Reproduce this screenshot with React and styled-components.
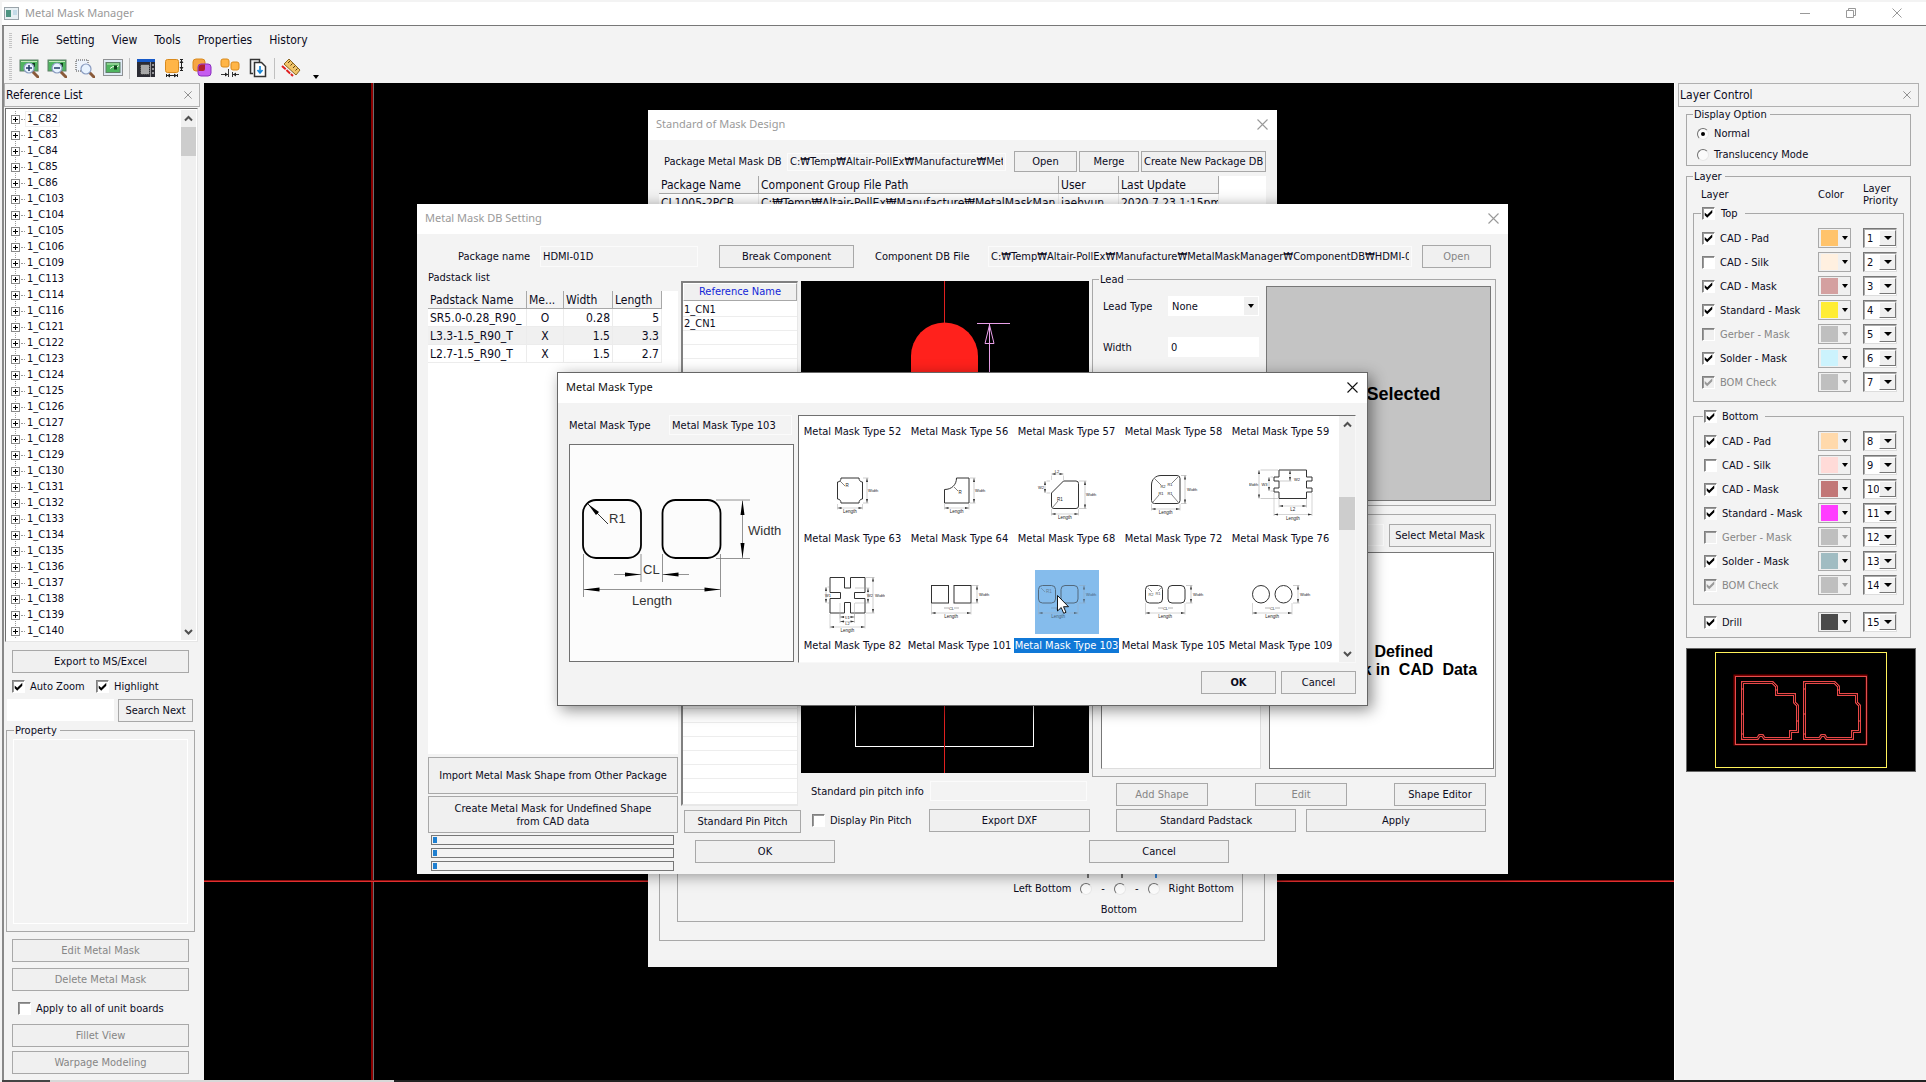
import React from 'react';
import styled, { createGlobalStyle, css } from 'styled-components';

const UI_FONT = '"DejaVu Sans Condensed", "DejaVu Sans", sans-serif';
const TITLE_FONT = '"Noto Sans", "Open Sans", sans-serif';
const ART_FONT = '"Liberation Sans", Arial, sans-serif';
const FACE = '#f3f3f3';
const LINE = '#a8a8a8';
const INK = '#0b0b1c';

const GlobalStyle = createGlobalStyle`
  *, *::before, *::after { box-sizing: border-box; }
  body { margin: 0; background: ${FACE}; }
  button, input, select { font: inherit; color: inherit; margin: 0; }
  ul { list-style: none; margin: 0; padding: 0; }
  svg { display: block; }
`;

/* ---------- shared controls ---------- */

const Button = styled.button`
  height: ${(p) => p.$h || 23}px;
  width: ${(p) => (p.$w ? p.$w + 'px' : 'auto')};
  padding: 0 2px;
  border: 1px solid ${LINE};
  border-radius: 0;
  background: #f0f0f0;
  color: ${INK};
  font-size: 11px;
  line-height: 13px;
  font-weight: ${(p) => (p.$strong ? 700 : 400)};
  white-space: nowrap;
  flex: none;
  &:disabled { color: #868686; }
`;

const TextField = styled.input`
  height: ${(p) => p.$h || 20}px;
  width: ${(p) => (p.$w ? p.$w + 'px' : '100%')};
  min-width: 0;
  padding: 0 2px;
  border: 1px solid ${(p) => (p.readOnly ? '#fbfbfb' : '#fff')};
  background: ${(p) => (p.readOnly ? FACE : '#fff')};
  font-size: 11px;
  line-height: 13px;
  outline: none;
`;

const Tick = styled.input.attrs({ type: 'checkbox' })`
  appearance: none;
  width: 13px;
  height: 13px;
  flex: none;
  display: grid;
  place-items: center;
  background: ${(p) => (p.disabled ? '#f0f0f0' : '#fff')};
  border: 1px solid;
  border-color: #808080 #fff #fff #808080;
  box-shadow: inset 1px 1px 0 #9a9a9a;
  &:checked::before {
    content: '';
    width: 9px;
    height: 9px;
    background: ${(p) => (p.disabled ? '#9a9a9a' : '#000')};
    clip-path: polygon(8% 38%, 36% 64%, 92% 8%, 92% 42%, 36% 98%, 8% 70%);
  }
`;

const Dot = styled.input.attrs({ type: 'radio' })`
  appearance: none;
  width: 12px;
  height: 12px;
  flex: none;
  display: grid;
  place-items: center;
  border-radius: 50%;
  background: #fbfbfb;
  border: 1px solid;
  border-color: #707070 #e8e8e8 #e8e8e8 #707070;
  &:checked::before {
    content: '';
    width: 4px;
    height: 4px;
    border-radius: 50%;
    background: #000;
  }
`;

const CheckLabel = styled.label`
  display: flex;
  align-items: center;
  gap: ${(p) => p.$gap || 5}px;
  color: ${(p) => (p.$off ? '#868686' : INK)};
  white-space: nowrap;
`;

function Check({ children, on, off, gap }) {
  return (
    <CheckLabel $off={off} $gap={gap}>
      <Tick defaultChecked={on} disabled={off} />
      {children}
    </CheckLabel>
  );
}

const Group = styled.fieldset`
  min-width: 0;
  margin: ${(p) => p.$m || '0'};
  padding: ${(p) => p.$p || '0'};
  border: 1px solid ${LINE};
`;

const Legend = styled.legend`
  margin-left: ${(p) => p.$x || 6}px;
  padding: 0 ${(p) => (p.$wide ? 7 : 3)}px 0 1px;
  height: 13px;
  line-height: 13px;
`;

const Arrow = styled.span`
  display: block;
  width: 0;
  height: 0;
  border: 4px solid transparent;
  border-top-color: ${(p) => (p.$off ? '#9a9a9a' : '#000')};
  border-bottom: 0;
  border-left-width: ${(p) => p.$s || 4}px;
  border-right-width: ${(p) => p.$s || 4}px;
`;

const Combo = styled.div`
  display: grid;
  grid-template-columns: 1fr ${(p) => (p.$raised ? 17 : 14)}px;
  width: ${(p) => p.$w}px;
  height: ${(p) => p.$h}px;
  background: #fff;
  border: 1px solid #fff;
  ${(p) => p.$raised && css`border-color: #777 #ddd #ddd #777; box-shadow: inset 1px 1px 0 #aaa;`}
  select {
    grid-area: 1 / 1 / 2 / 3;
    appearance: none;
    border: 0;
    padding: 0 2px 0 3px;
    background: transparent;
    outline: none;
    min-width: 0;
  }
`;

const ComboArrow = styled.span`
  grid-area: 1 / 2;
  pointer-events: none;
  display: grid;
  place-items: center;
  background: #f0f0f0;
  ${(p) => p.$raised && css`
    margin: 1px 0;
    border: 1px solid;
    border-color: #fff #777 #777 #fff;
  `}
`;

const BarTrack = styled.div`
  width: ${(p) => p.$w || 15}px;
  flex: none;
  display: flex;
  flex-direction: column;
  align-items: center;
  background: #f0f0f0;
`;
const BarLead = styled.div`flex: ${(p) => p.$grow};`;
const BarThumb = styled.div`
  width: 100%;
  height: ${(p) => p.$h}px;
  background: #cdcdcd;
`;

function Chevron({ down }) {
  return (
    <svg width="15" height="17" viewBox="0 0 15 17" fill="none" stroke="#505050" strokeWidth="2">
      <path d={down ? 'M4 7l3.5 3.5L11 7' : 'M4 10.500l3.500-3.500L11 10.500'} />
    </svg>
  );
}

function ScrollBar({ w, before, thumb, after }) {
  return (
    <BarTrack $w={w} aria-hidden="true">
      <Chevron />
      <BarLead $grow={before} />
      <BarThumb $h={thumb} />
      <BarLead $grow={after} />
      <Chevron down />
    </BarTrack>
  );
}

const CloseButton = styled.button`
  width: ${(p) => p.$s || 30}px;
  height: ${(p) => p.$s || 30}px;
  padding: 0;
  border: 0;
  background: transparent;
  color: ${(p) => p.$c || '#999'};
  display: grid;
  place-items: center;
`;

function Close({ size = 11, color, box }) {
  return (
    <CloseButton $c={color} $s={box} aria-label="Close">
      <svg width={size} height={size} viewBox="0 0 11 11" stroke="currentColor" strokeWidth="1.1">
        <path d="M.5.500l10 10M10.500.500l-10 10" />
      </svg>
    </CloseButton>
  );
}

/* ---------- main window ---------- */

const Shell = styled.div`
  min-height: 100vh;
  display: flex;
  flex-direction: column;
  padding: 2px 0 0 2px;
  background: ${FACE};
  color: ${INK};
  font: 11px/13px ${UI_FONT};
`;

const TitleBar = styled.header`
  display: flex;
  align-items: center;
  height: 24px;
  padding: 0 6px 1px 2px;
  background: #fff;
  border-bottom: 1px solid #777;
  color: #999;
  font: 11px/16px ${TITLE_FONT};
`;
const AppName = styled.span`flex: 1; padding-left: 6px;`;
const SysButton = styled.button`
  width: 46px;
  height: 22px;
  border: 0;
  padding: 0;
  background: transparent;
  color: #999;
  display: grid;
  place-items: center;
`;

const Frame = styled.div`
  flex: 1;
  display: flex;
  flex-direction: column;
  border-left: 2px solid #888;
`;

const Grip = styled.span`
  width: 3px;
  height: 15px;
  background: repeating-linear-gradient(#c4c4c4 0 1px, transparent 1px 2px);
`;

const MenuBar = styled.nav`
  display: flex;
  align-items: center;
  gap: 17px;
  height: 27px;
  padding: 1px 0 0 5px;
  font-size: 12px;
  ${Grip} { margin-right: -8px; }
`;
const MenuItem = styled.button`
  border: 0;
  padding: 0;
  background: transparent;
`;

const ToolBar = styled.div`
  display: flex;
  align-items: center;
  gap: 8px;
  height: 30px;
  padding-left: 5px;
  ${Grip} { height: 23px; margin-right: -1px; }
`;
const ToolButton = styled.button`
  width: 20px;
  height: 20px;
  border: 0;
  padding: 0;
  background: transparent;
`;
const ToolRule = styled.span`
  width: 1px;
  height: 21px;
  margin: 0 -2px 0 -2px;
  background: #c0c0c0;
`;
const ToolMore = styled.button`
  align-self: flex-end;
  border: 0;
  padding: 0 0 4px 4px;
  background: transparent;
`;

const Work = styled.div`
  flex: 1;
  display: flex;
  align-items: stretch;
`;

const StatusEdge = styled.div`
  height: 2px;
  background: linear-gradient(90deg, #444 48px, #d8d8d8 48px 392px, #222 392px);
`;

/* toolbar drawings */

const Board = ({ x = 1, y = 2, w = 18, h = 11 }) => (
  <g>
    <rect x={x} y={y} width={w} height={h} fill="#4fb560" stroke="#5f7f68" />
    <path d={`M${x + 1} ${y + 1.500}h${w - 2}`} stroke="#c4ecbc" />
    <path d={`M${x + 4} ${y + 6}l3-2 3 1 3-2`} stroke="#e8f8e0" fill="none" />
    <rect x={x + w - 6} y={y + 3} width="3" height="4" fill="#10401c" />
  </g>
);
const Lens = ({ cx = 10, cy = 10, sign }) => (
  <g>
    <path d={`M${cx + 4} ${cy + 4}l5 5`} stroke="#8a5a3a" strokeWidth="3" strokeLinecap="round" />
    <circle cx={cx} cy={cy} r="5" fill="#e8f3ff" stroke="#8a9cc0" strokeWidth="1.200" />
    {sign && <path d={`M${cx - 3} ${cy}h6` + (sign === '+' ? `M${cx} ${cy - 3}v6` : '')} stroke="#223a66" strokeWidth="1.500" />}
  </g>
);
const Icon = ({ children }) => <svg width="20" height="20" viewBox="0 0 20 20" fill="none">{children}</svg>;

const TOOLS = [
  ['Zoom in', <Icon key="i"><Board /><Lens sign="+" /></Icon>],
  ['Zoom out', <Icon key="i"><Board /><Lens sign="-" /></Icon>],
  ['Zoom window', <Icon key="i"><rect x="1" y="2" width="12" height="11" fill="#edf3fb" stroke="#444" strokeDasharray="1 1" /><Lens cx={11} cy={11} /></Icon>],
  ['Fit to board', <Icon key="i"><rect x=".5" y="1.500" width="19" height="16" fill="#dfeaf5" stroke="#333" strokeDasharray="1 1" /><Board x={3} y={4.500} w={14} h={10} /></Icon>],
  null,
  ['Component', <Icon key="i"><rect x="1" y="1" width="18" height="18" fill="#2c2c34" /><rect x="1" y="1" width="18" height="3" fill="#1659c8" /><rect x="4.500" y="6.500" width="9" height="10" rx="1" fill="#a8a8a8" stroke="#222" strokeDasharray="1 1" /><path d="M14.500 4v15" stroke="#ddd" strokeWidth=".6" /><path d="M17 6v2m0 2v2m0 2v2" stroke="#fff" /></Icon>],
  ['Pad size', <Icon key="i"><rect x="1.500" y="1.500" width="13" height="13" rx="2" fill="#ffb547" stroke="#d98a1c" /><path d="M17.500 1v12M16 1.500h3M16 12.500h3M2 17.500h11M2.500 16v3M13.500 16v3" stroke="#222" /><path d="M15.500 5l2-3 2 3zM15.500 9l2 3 2-3zM6 15.500l-3 2 3 2zM10 15.500l3 2-3 2z" fill="#222" /></Icon>],
  ['Overlap', <Icon key="i"><rect x="1" y="1" width="12" height="12" rx="3" fill="#f6a545" stroke="#d98a1c" /><rect x="6" y="6" width="13" height="12" rx="3" fill="#c65cf0" stroke="#8b2fc0" /><path d="M6.500 9a3 3 0 013-2.500H13V11a2 2 0 01-2 2H6.500z" fill="#b01f2e" /></Icon>],
  ['Spacing', <Icon key="i"><rect x="1" y="1" width="8" height="8" rx="2" fill="#ffb547" stroke="#d98a1c" /><rect x="11" y="4" width="8" height="8" rx="2" fill="#ffb547" stroke="#d98a1c" /><path d="M8.500 11v8M12.500 14v5M1 16.500h7M13 16.500h6" stroke="#333" /><path d="M5 14.500l3 2-3 2zM16 14.500l-3 2 3 2z" fill="#222" /></Icon>],
  ['Export copy', <Icon key="i"><path d="M5 15.500H2.500v-14h9V4" stroke="#333" strokeWidth="1.500" /><path d="M6.500 4.500h7l4 4v10h-11z" fill="#fff" stroke="#333" strokeWidth="1.500" /><path d="M12 8v6M9.500 12l2.500 3 2.500-3" stroke="#1787d8" strokeWidth="1.700" /></Icon>],
  null,
  ['Measure', <Icon key="i"><path d="M3 6l5-5 11 11-4 5z" fill="#f0c468" stroke="#8a6420" /><path d="M7 5l2-2M9.500 7.500l2-2M12 10l2-2M14.500 12.500l2-2" stroke="#5a3c0c" /><path d="M1 8l11 10" stroke="#e02020" strokeWidth="2" strokeDasharray="5 1" /></Icon>],
];

/* ---------- reference list dock ---------- */

const DockHead = styled.div`
  display: flex;
  align-items: center;
  justify-content: space-between;
  height: 24px;
  margin: ${(p) => p.$m};
  padding: 0 0 0 1px;
  border: 1px solid #b0b0b0;
  font: 12px/16px ${UI_FONT};
  h2 { margin: 0; font: inherit; }
`;

const LeftDock = styled.aside`
  width: 200px;
  flex: none;
  display: flex;
  flex-direction: column;
  padding-bottom: 6px;
`;

const TreeBox = styled.div`
  display: flex;
  margin: 1px 6px 0 1px;
  padding: 1px;
  background: #fff;
  border: 1px solid;
  border-color: #707070 #e6e6e6 #e6e6e6 #707070;
`;
const Tree = styled.ul`
  flex: 1;
  padding: 1px 0 1px 4px;
`;
const TreeRow = styled.li`
  display: flex;
  align-items: center;
  height: 16px;
`;
const NodeCell = styled.span`
  display: grid;
  place-items: center;
  width: 9px;
  height: 16px;
  background: repeating-linear-gradient(#999 0 1px, transparent 1px 2px) center / 1px 100% no-repeat;
`;
const NodeToggle = styled.button`
  width: 9px;
  height: 9px;
  padding: 0;
  border: 1px solid #888;
  background:
    linear-gradient(#000, #000) center / 5px 1px no-repeat,
    linear-gradient(#000, #000) center / 1px 5px no-repeat,
    #fff;
`;
const NodeDash = styled.span`
  width: 4px;
  margin: 0 1px;
  border-top: 1px dotted #999;
`;
const NodeName = styled.span`
  padding: 0 1px;
  line-height: 14px;
  box-shadow: ${(p) => (p.$focus ? '0 0 0 1px #f0f0f0' : 'none')};
`;

const Stack = styled.div`
  display: flex;
  flex-direction: column;
  margin: 0 15px 0 8px;
  padding-top: ${(p) => p.$top}px;
  gap: ${(p) => p.$gap || 0}px;
`;
const CheckPair = styled.div`
  display: grid;
  grid-template-columns: 84px 1fr;
  padding: 7px 0 6px 8px;
`;
const SearchRow = styled.div`
  display: grid;
  grid-template-columns: 1fr 75px;
  gap: 4px;
  margin: 0 11px 2px 3px;
`;
const PropertyGroup = styled(Group)`
  flex: 1;
  display: flex;
  margin: 0 9px 0 2px;
  padding: 2px 6px 7px;
`;
const PropertyView = styled.div`
  flex: 1;
  border: 1px solid #fff;
`;
const UnitCheck = styled.div`padding: 11px 0 9px 14px;`;

const REFERENCES = [82, 83, 84, 85, 86, 103, 104, 105, 106, 109, 113, 114, 116, ...Array.from({ length: 20 }, (_, i) => 121 + i)];

function ReferenceDock() {
  return (
    <LeftDock>
      <DockHead $m="0 4px 0 0"><h2>Reference List</h2><Close size={8} box={22} color="#777" /></DockHead>
      <TreeBox>
        <Tree>
          {REFERENCES.map((n, i) => (
            <TreeRow key={n}>
              <NodeCell><NodeToggle aria-label={`Expand 1_C${n}`} /></NodeCell>
              <NodeDash />
              <NodeName $focus={i === 0}>{`1_C${n}`}</NodeName>
            </TreeRow>
          ))}
        </Tree>
        <ScrollBar before={0} thumb={29} after={1} />
      </TreeBox>
      <Stack $top={8}><Button>Export to MS/Excel</Button></Stack>
      <CheckPair>
        <Check on>Auto Zoom</Check>
        <Check on>Highlight</Check>
      </CheckPair>
      <SearchRow>
        <TextField $h={22} aria-label="Search reference" />
        <Button>Search Next</Button>
      </SearchRow>
      <PropertyGroup>
        <Legend $x={1}>Property</Legend>
        <PropertyView />
      </PropertyGroup>
      <Stack $top={7} $gap={6}>
        <Button disabled>Edit Metal Mask</Button>
        <Button disabled>Delete Metal Mask</Button>
      </Stack>
      <UnitCheck><Check>Apply to all of unit boards</Check></UnitCheck>
      <Stack $top={0} $gap={4}>
        <Button disabled>Fillet View</Button>
        <Button disabled>Warpage Modeling</Button>
      </Stack>
    </LeftDock>
  );
}

/* ---------- layer control dock ---------- */

const RightDock = styled.aside`
  width: 252px;
  flex: none;
  display: flex;
  flex-direction: column;
  border-left: 1px solid #fff;
`;
const OptionList = styled.div`
  display: flex;
  flex-direction: column;
  gap: 8px;
  padding: 6px 0 4px 10px;
`;
const LayerHead = styled.div`
  display: grid;
  grid-template-columns: 1fr 45px 47px;
  align-items: center;
  height: 24px;
  padding: 0 0 0 14px;
  line-height: 12px;
`;
const LayerRows = styled.div`
  display: flex;
  flex-direction: column;
  gap: 4px;
  padding: ${(p) => p.$p};
`;
const LayerRow = styled.div`
  display: grid;
  grid-template-columns: 1fr 33px 34px;
  column-gap: 12px;
  align-items: center;
  height: 20px;
`;
const ColorButton = styled.button`
  display: flex;
  align-items: center;
  gap: 4px;
  height: 20px;
  padding: 0 0 0 2px;
  border: 1px solid ${LINE};
  background: #f0f0f0;
`;
const Swatch = styled.span`
  width: 17px;
  height: 16px;
  background: ${(p) => p.$c};
`;
const Overview = styled.div`
  align-self: flex-start;
  margin: 10px 0 0 11px;
  background: #000;
  border: 1px solid #666;
`;

const TOP_LAYERS = [
  ['CAD - Pad', '#ffc36b', 1, true],
  ['CAD - Silk', '#fff0e0', 2, false],
  ['CAD - Mask', '#d4a0a0', 3, true],
  ['Standard - Mask', '#ffed33', 4, true],
  ['Gerber - Mask', '#bfbfbf', 5, false, true],
  ['Solder - Mask', '#ccf3fd', 6, true],
  ['BOM Check', '#bfbfbf', 7, true, true],
];
const BOTTOM_LAYERS = [
  ['CAD - Pad', '#ffd9ab', 8, true],
  ['CAD - Silk', '#ffdbd8', 9, false],
  ['CAD - Mask', '#c27777', 10, true],
  ['Standard - Mask', '#ff3dff', 11, true],
  ['Gerber - Mask', '#bfbfbf', 12, false, true],
  ['Solder - Mask', '#a0bcc2', 13, true],
  ['BOM Check', '#bfbfbf', 14, true, true],
];
const PRIORITIES = Array.from({ length: 15 }, (_, i) => i + 1);

function Layer({ data: [name, color, priority, on, off] }) {
  return (
    <LayerRow>
      <Check on={on} off={off}>{name}</Check>
      <ColorButton disabled={off} aria-label={`${name} color`}>
        <Swatch $c={color} /><Arrow $off={off} $s={3} />
      </ColorButton>
      <Combo $w={34} $h={20} $raised>
        <select defaultValue={priority} aria-label={`${name} priority`}>
          {PRIORITIES.map((n) => <option key={n}>{n}</option>)}
        </select>
        <ComboArrow $raised><Arrow /></ComboArrow>
      </Combo>
    </LayerRow>
  );
}

const OUTLINE = 'M56 34H86L90 38V46H108V54L111 57V83H104V90H78L76 87H73L71 90H56Z';

function LayerDock() {
  return (
    <RightDock>
      <DockHead $m="0 7px 0 3px"><h2>Layer Control</h2><Close size={8} box={22} color="#777" /></DockHead>
      <Group $m="1px 15px 4px 11px">
        <Legend>Display Option</Legend>
        <OptionList>
          <CheckLabel $gap={5}><Dot name="display" defaultChecked />Normal</CheckLabel>
          <CheckLabel $gap={5}><Dot name="display" />Translucency Mode</CheckLabel>
        </OptionList>
      </Group>
      <Group $m="0 15px 0 11px">
        <Legend>Layer</Legend>
        <LayerHead><span>Layer</span><span>Color</span><span>Layer Priority</span></LayerHead>
        <Group $m="0 6px">
          <Legend $x={7} $wide><Check on gap={6}>Top</Check></Legend>
          <LayerRows $p="8px 6px 9px 8px">{TOP_LAYERS.map((l) => <Layer key={l[2]} data={l} />)}</LayerRows>
        </Group>
        <Group $m="8px 6px 0">
          <Legend $x={9} $wide><Check on>Bottom</Check></Legend>
          <LayerRows $p="8px 6px 9px 10px">{BOTTOM_LAYERS.map((l) => <Layer key={l[2]} data={l} />)}</LayerRows>
        </Group>
        <LayerRows $p="7px 13px 5px 17px"><Layer data={['Drill', '#4a4a4a', 15, true]} /></LayerRows>
      </Group>
      <Overview>
        <svg width="228" height="122" viewBox="1 1 228 122" fill="none" role="img" aria-label="Board overview">
          <rect x="29.500" y="4.500" width="171" height="115" stroke="#fff25a" />
          <rect x="48.500" y="27.500" width="132" height="69" stroke="#7a0000" strokeWidth="2" />
          <rect x="49.500" y="28.500" width="131" height="68" stroke="#e05050" />
          {[0, 62].map((dx) => (
            <g key={dx} transform={`translate(${dx + 0.5} .5)`}>
              <path d={OUTLINE} stroke="#e84848" strokeWidth="3" />
              <path d={OUTLINE} stroke="#1c0505" strokeWidth="1" />
              <path d="M56 40v1M56 65v1M56 85v1M90 41v1M111 72v1" stroke="#ff5050" strokeWidth="2" />
            </g>
          ))}
        </svg>
      </Overview>
    </RightDock>
  );
}

/* ---------- drawing area and windows ---------- */

const Desk = styled.main`
  position: relative;
  flex: 1;
  min-width: 0;
  overflow: hidden;
  background: #000;
`;
const AxisV = styled.i`
  position: absolute;
  top: 0;
  bottom: 0;
  left: 167px;
  width: 3px;
  background: linear-gradient(90deg, #8b0000 2px, #6c6c6c 2px);
`;
const AxisH = styled.i`
  position: absolute;
  left: 0;
  right: 0;
  top: 797px;
  height: 2px;
  background: linear-gradient(#8a1010 1px, #e03030 1px);
`;

const Win = styled.section`
  position: absolute;
  left: ${(p) => p.$x}px;
  top: ${(p) => p.$y}px;
  width: ${(p) => p.$w}px;
  min-height: ${(p) => p.$h}px;
  display: flex;
  flex-direction: column;
  background: ${FACE};
  ${(p) => p.$active && css`border: 1px solid #666;`}
  box-shadow: ${(p) => (p.$active ? '4px 4px 14px rgba(0,0,0,.45)' : '1px 2px 14px rgba(0,0,0,.4)')};
`;
const WinHead = styled.header`
  display: flex;
  align-items: center;
  justify-content: space-between;
  height: 30px;
  padding: 0 0 2px 8px;
  background: #fff;
  color: ${(p) => (p.$active ? '#111' : '#9a9a9a')};
  h2 { margin: 0; font: 11px/16px ${TITLE_FONT}; }
`;

const DataTable = styled.table`
  table-layout: fixed;
  width: ${(p) => p.$w}px;
  border-collapse: separate;
  border-spacing: 0;
  background: #fff;
  font-size: 12px;
  line-height: 16px;
  th, td {
    padding: 0 2px;
    overflow: hidden;
    white-space: nowrap;
    text-align: left;
    font-weight: 400;
    border-right: 1px solid #ececec;
    border-bottom: 1px solid #ececec;
  }
  th {
    height: 18px;
    background: ${FACE};
    border-color: ${LINE};
  }
  td { height: 18px; }
`;
const Cell = styled.td`
  && { text-align: ${(p) => p.$a || 'left'}; background: ${(p) => (p.$shade ? '#f0f0f0' : '#fff')}; }
`;

/* Standard of Mask Design */

const DbRow = styled.div`
  display: grid;
  grid-template-columns: 123px 219px 1fr;
  align-items: center;
  padding: 11px 0 4px 16px;
`;
const DbButtons = styled.div`
  display: flex;
  gap: 2px;
  padding-left: 8px;
`;
const DbList = styled.div`
  height: 300px;
  margin: 0 11px 20px;
  background: #fff;
  overflow: hidden;
`;
const OuterPanel = styled.div`
  flex: 1;
  display: flex;
  margin: 0 12px 26px 11px;
  padding: 12px 21px 18px 17px;
  border: 1px solid ${LINE};
`;
const InnerPanel = styled.div`
  flex: 1;
  display: flex;
  flex-direction: column;
  justify-content: flex-end;
  padding: 0 8px 5px 0;
  border: 1px solid ${LINE};
`;
const CornerRow = styled.div`
  display: flex;
  justify-content: flex-end;
  align-items: center;
  gap: 9px;
`;
const CornerTicks = styled.div`
  display: flex;
  justify-content: flex-end;
  gap: 32px;
  padding: 0 77px 4px 0;
`;
const CornerTick = styled.i`
  width: 2px;
  height: 12px;
  background: ${(p) => (p.$c || '#777')};
`;
const BottomCaption = styled.div`
  padding: 8px 97px 0 0;
  text-align: right;
`;

function StandardWindow() {
  return (
    <Win $x={444} $y={27} $w={629} $h={857}>
      <WinHead><h2>Standard of Mask Design</h2><Close /></WinHead>
      <DbRow>
        <label htmlFor="db-path">Package Metal Mask DB</label>
        <TextField id="db-path" $h={18} readOnly defaultValue="C:₩Temp₩Altair-PollEx₩Manufacture₩MetalMaskManager" />
        <DbButtons>
          <Button $h={21} $w={63}>Open</Button>
          <Button $h={21} $w={60}>Merge</Button>
          <Button $h={21} $w={125}>Create New Package DB</Button>
        </DbButtons>
      </DbRow>
      <DbList>
        <DataTable $w={560}>
          <colgroup><col width="100" /><col width="300" /><col width="60" /><col width="100" /></colgroup>
          <thead><tr><th>Package Name</th><th>Component Group File Path</th><th>User</th><th>Last Update</th></tr></thead>
          <tbody><tr><td>CL1005-2PCB</td><td>C:₩Temp₩Altair-PollEx₩Manufacture₩MetalMaskMan</td><td>jaehyun</td><td>2020.7.23 1:15pm</td></tr></tbody>
        </DataTable>
      </DbList>
      <OuterPanel>
        <InnerPanel>
          <CornerTicks><CornerTick /><CornerTick /><CornerTick $c="#3a86d8" /></CornerTicks>
          <CornerRow>
            <label htmlFor="corner-lb">Left Bottom</label>
            <Dot id="corner-lb" name="corner" /><span>-</span>
            <Dot name="corner" aria-label="Bottom" /><span>-</span>
            <Dot id="corner-rb" name="corner" />
            <label htmlFor="corner-rb">Right Bottom</label>
          </CornerRow>
          <BottomCaption>Bottom</BottomCaption>
        </InnerPanel>
      </OuterPanel>
    </Win>
  );
}

/* Metal Mask DB Setting */

const PackageRow = styled.div`
  display: grid;
  grid-template-columns: 82px 158px 156px 134px 424px 79px;
  align-items: center;
  padding: 11px 0 0 41px;
`;
const PackageCell = styled.div`
  padding-left: ${(p) => p.$l}px;
  display: flex;
  align-items: center;
  white-space: nowrap;
`;
const SettingBody = styled.div`
  flex: 1;
  display: flex;
  gap: 3px;
  padding: 0 12px 2px 11px;
`;
const PadColumn = styled.div`
  width: 250px;
  flex: none;
  display: flex;
  flex-direction: column;
  gap: 2px;
  padding-top: 3px;
`;
const PadList = styled.div`
  flex: 1;
  margin: 5px 0 1px;
  background: #fff;
`;
const Meter = styled.div`
  height: 10px;
  margin: 0 4px 1px 3px;
  padding: 1px;
  border: 1px solid #777;
  background: ${FACE};
`;
const MeterFill = styled.div`
  width: 4px;
  height: 6px;
  background: #1e7fd0;
`;
const MainColumn = styled.div`
  flex: 1;
  padding-top: 5px;
`;
const Panes = styled.div`
  display: grid;
  grid-template-columns: 120px 288px 1fr;
`;
const NamePane = styled.div`
  display: flex;
  flex-direction: column;
  align-items: flex-end;
  gap: 4px;
  padding-top: 8px;
`;
const NameBox = styled.div`
  width: 117px;
  height: 525px;
  margin-right: 3px;
  overflow: hidden;
  background: #fff;
  border: 2px solid;
  border-color: #808080 #e8e8e8 #e8e8e8 #808080;
  border-right-width: 1px;
`;
const NameTable = styled.table`
  width: 100%;
  border-spacing: 0;
  line-height: 12px;
  th {
    height: 18px;
    font-weight: 400;
    color: #1226d8;
    background: #f0f0f0;
    border: 1px solid ${LINE};
    border-top-color: #fff;
    border-left-color: #fff;
  }
  td { height: 14px; padding: 0 1px; border-bottom: 1px solid #ededed; }
  tr:first-child td { height: 16px; padding-top: 2px; }
`;
const ViewPane = styled.div`padding-top: 8px;`;
const PitchRow = styled.div`
  display: grid;
  grid-template-columns: 119px 157px;
  align-items: center;
  padding: 8px 0 8px 10px;
`;
const ExportRow = styled.div`
  display: grid;
  grid-template-columns: 117px 161px;
  align-items: center;
  padding-left: 11px;
`;
const MaskPane = styled.div`padding-left: 3px;`;
const LeadForm = styled.div`
  display: grid;
  grid-template-columns: 65px 91px;
  grid-auto-rows: 20px;
  row-gap: 21px;
  align-content: start;
  align-items: center;
  padding: 10px 0 0 10px;
`;
const LeadLayout = styled.div`
  display: flex;
  justify-content: space-between;
  padding: 0 4px 4px 0;
`;
const Notice = styled.div`
  width: 225px;
  height: ${(p) => p.$h}px;
  display: grid;
  place-content: center;
  border: 1px solid #777;
  background: ${(p) => p.$bg};
  color: #000;
  font: 700 ${(p) => p.$fs}px/18px ${ART_FONT};
  text-align: center;
  white-space: pre;
`;
const MaskHead = styled.div`
  display: flex;
  justify-content: flex-end;
  gap: 5px;
  padding: 9px 4px 5px 8px;
`;
const MaskPanels = styled.div`
  display: flex;
  gap: 8px;
  padding: 0 1px 7px 8px;
`;
const ShapeList = styled.div`
  flex: 1;
  background: #fff;
  border: 1px solid;
  border-color: #777 #ddd #ddd #777;
`;
const ActionRow = styled.div`
  display: flex;
  justify-content: space-between;
  padding: ${(p) => p.$top}px 10px 0 24px;
`;
const ConfirmRow = styled.div`
  display: flex;
  gap: 254px;
  padding: 7px 0 9px 14px;
`;

const PADSTACKS = [
  ['SR5.0-0.28_R90_', 'O', '0.28', '5'],
  ['L3.3-1.5_R90_T', 'X', '1.5', '3.3'],
  ['L2.7-1.5_R90_T', 'X', '1.5', '2.7'],
];
const NAMES = ['1_CN1', '2_CN1', ...Array(34).fill('')];

function SettingWindow() {
  return (
    <Win $x={213} $y={121} $w={1091} $h={669}>
      <WinHead><h2>Metal Mask DB Setting</h2><Close /></WinHead>
      <PackageRow>
        <label htmlFor="pkg">Package name</label>
        <TextField id="pkg" $h={21} readOnly defaultValue="HDMI-01D" />
        <PackageCell $l={21}><Button $w={135}>Break Component</Button></PackageCell>
        <PackageCell $l={21}><label htmlFor="cdb">Component DB File</label></PackageCell>
        <TextField id="cdb" $h={21} readOnly defaultValue="C:₩Temp₩Altair-PollEx₩Manufacture₩MetalMaskManager₩ComponentDB₩HDMI-01D" />
        <PackageCell $l={10}><Button $w={69} disabled>Open</Button></PackageCell>
      </PackageRow>
      <SettingBody>
        <PadColumn>
          <span>Padstack list</span>
          <PadList>
            <DataTable $w={234}>
              <colgroup><col width="99" /><col width="37" /><col width="49" /><col width="49" /></colgroup>
              <thead><tr><th>Padstack Name</th><th>Me...</th><th>Width</th><th>Length</th></tr></thead>
              <tbody>
                {PADSTACKS.map((r, i) => (
                  <tr key={r[0]}>
                    <Cell $shade={i === 1}>{r[0]}</Cell>
                    <Cell $shade={i === 1} $a="center">{r[1]}</Cell>
                    <Cell $shade={i === 1} $a="right">{r[2]}</Cell>
                    <Cell $shade={i === 1} $a="right">{r[3]}</Cell>
                  </tr>
                ))}
              </tbody>
            </DataTable>
          </PadList>
          <Button $h={37}>Import Metal Mask Shape from Other Package</Button>
          <Button $h={37}>Create Metal Mask for Undefined Shape<br />from CAD data</Button>
          {[0, 1, 2].map((n) => <Meter key={n}><MeterFill /></Meter>)}
        </PadColumn>
        <MainColumn>
          <Panes>
            <NamePane>
              <NameBox>
                <NameTable>
                  <thead><tr><th>Reference Name</th></tr></thead>
                  <tbody>{NAMES.map((n, i) => <tr key={i}><td>{n}</td></tr>)}</tbody>
                </NameTable>
              </NameBox>
              <Button $w={117}>Standard Pin Pitch</Button>
            </NamePane>
            <ViewPane>
              <svg width="288" height="492" viewBox="0 0 288 492" fill="none" role="img" aria-label="Pad preview">
                <rect width="288" height="492" fill="#000" />
                <path d="M110 160V75a33.500 33.500 0 0167 0v85z" fill="#ff211c" />
                <rect x="54.500" y="180.500" width="178" height="285" stroke="#fff" />
                <path d="M143.500 0v42M143.500 160v332" stroke="#e02020" />
                <path d="M176 42.500h33M188.500 42v120M184 62.500h9L188.500 44z" stroke="#e9a0e9" />
              </svg>
              <PitchRow>
                <label htmlFor="pitch">Standard pin pitch info</label>
                <TextField id="pitch" readOnly />
              </PitchRow>
              <ExportRow>
                <Check>Display Pin Pitch</Check>
                <Button>Export DXF</Button>
              </ExportRow>
            </ViewPane>
            <MaskPane>
              <Group $m="0 0 8px">
                <Legend>Lead</Legend>
                <LeadLayout>
                  <LeadForm>
                    <label htmlFor="lead">Lead Type</label>
                    <Combo $w={91} $h={20}>
                      <select id="lead" defaultValue="None"><option>None</option></select>
                      <ComboArrow><Arrow $s={3} /></ComboArrow>
                    </Combo>
                    <label htmlFor="lead-w">Width</label>
                    <TextField id="lead-w" defaultValue="0" />
                  </LeadForm>
                  <Notice $h={215} $bg="#c4c4c4" $fs={18}>None Selected</Notice>
                </LeadLayout>
              </Group>
              <Group>
                <MaskHead>
                  <TextField $h={22} readOnly aria-label="Metal mask" />
                  <Button $w={102}>Select Metal Mask</Button>
                </MaskHead>
                <MaskPanels>
                  <ShapeList />
                  <Notice $h={217} $bg="#fff" $fs={16}>{'Not    Defined\nMetal Mask in  CAD  Data'}</Notice>
                </MaskPanels>
              </Group>
              <ActionRow $top={6}>
                <Button $w={92} disabled>Add Shape</Button>
                <Button $w={92} disabled>Edit</Button>
                <Button $w={92}>Shape Editor</Button>
              </ActionRow>
              <ActionRow $top={3}>
                <Button $w={180}>Standard Padstack</Button>
                <Button $w={180}>Apply</Button>
              </ActionRow>
            </MaskPane>
          </Panes>
          <ConfirmRow>
            <Button $w={140}>OK</Button>
            <Button $w={140}>Cancel</Button>
          </ConfirmRow>
        </MainColumn>
      </SettingBody>
    </Win>
  );
}

/* Metal Mask Type */

const TypeBody = styled.div`
  display: grid;
  grid-template-columns: 225px 558px;
  column-gap: 4px;
  padding: 12px 11px 0;
`;
const TypeRow = styled.div`
  display: grid;
  grid-template-columns: 100px 123px;
  align-items: center;
  height: 20px;
  margin-bottom: 9px;
`;
const TypeView = styled.div`
  height: 218px;
  background: #fcfcfc;
  border: 1px solid #707070;
`;
const TypeBox = styled.div`
  display: flex;
  height: 248px;
  background: #fff;
  border: 1px solid;
  border-color: #707070 #f8f8f8 #f8f8f8 #707070;
`;
const TypeGrid = styled.ul`
  flex: 1;
  display: grid;
  grid-template-columns: repeat(5, 107px);
  row-gap: 24px;
  align-content: start;
  padding-top: 8px;
`;
const TypeItem = styled.li`
  position: relative;
  display: flex;
  flex-direction: column;
  align-items: center;
  gap: 4px;
`;
const Thumb = styled.div`
  background: ${(p) => (p.$on ? '#85bcec' : 'transparent')};
  svg { opacity: ${(p) => (p.$on ? 0.6 : 1)}; }
`;
const TypeName = styled.span`
  padding: 1px;
  line-height: 13px;
  white-space: nowrap;
  background: ${(p) => (p.$on ? '#1078d7' : 'transparent')};
  color: ${(p) => (p.$on ? '#fff' : INK)};
`;
const Pointer = styled.svg`
  position: absolute;
  left: 44px;
  top: 25px;
`;
const TypeFoot = styled.div`
  display: flex;
  justify-content: flex-end;
  gap: 5px;
  padding: 8px 11px 10px;
`;

const T = ({ x, y, s = 4.5, children, c = '#222', a = 'middle' }) => (
  <text x={x} y={y} fontSize={s} fill={c} textAnchor={a} fontFamily={ART_FONT}>{children}</text>
);

/* small horizontal and vertical dimension lines with arrow heads */
const HDim = ({ x1, x2, y, from, label }) => (
  <g stroke="#555" strokeWidth=".5">
    <path d={`M${x1} ${from}V${y + 1.5}M${x2} ${from}V${y + 1.5}M${x1} ${y}H${x2}`} stroke="#aaa" />
    <path d={`M${x1} ${y}l4-1v2zM${x2} ${y}l-4-1v2z`} fill="#333" stroke="none" />
    {label && <g stroke="none"><T x={(x1 + x2) / 2} y={y + 5}>{label}</T></g>}
  </g>
);
const VDim = ({ x, y1, y2, from, label, lx = x + 1 }) => (
  <g stroke="#555" strokeWidth=".5">
    <path d={`M${from} ${y1}H${x + 1.5}M${from} ${y2}H${x + 1.5}M${x} ${y1}V${y2}`} stroke="#999" />
    <path d={`M${x} ${y1}l-1 4h2zM${x} ${y2}l-1-4h2z`} fill="#333" stroke="none" />
    {label && <g stroke="none"><T x={lx} y={(y1 + y2) / 2 + 1.5} s={4} a="start">{label}</T></g>}
  </g>
);
const Pair = ({ r, children }) => (
  <>
    <rect x="3.500" y="15.500" width="17" height="17.500" rx={r} />
    <rect x="26" y="15.500" width="17" height="17.500" rx={r} />
    <g stroke="none">
      <HDim x1={3.5} x2={43} y={43} from={33} label="Length" />
      <VDim x={49} y1={15.5} y2={33} from={44} label="Width" lx={51} />
      <T x={23.5} y={39.5} s={4}>CL</T>
      <path d="M16 38h5M26 38h5" stroke="#666" strokeWidth=".5" />
      {children}
    </g>
  </>
);

const ART = {
  63: <><path d="M20 15h18c0 2 1 4 3.500 4v17c-2.500 0-3.500 2-3.500 4H20c0-2-1-4-3.500-4V19c2.500 0 3.500-2 3.500-4z" /><path d="M19 18l5 5" strokeWidth=".6" /><g stroke="none"><T x={26} y={24}>R</T><HDim x1={16.5} x2={41.5} y={45} from={41} label="Length" /><VDim x={46} y1={15} y2={40} from={42} label="Width" /></g></>,
  64: <><path d="M28.500 15H41v25H16.500V26.500c7 0 12-4.500 12-11.500z" /><path d="M26 24l4 4" strokeWidth=".6" /><g stroke="none"><T x={32} y={30.5}>R</T><HDim x1={16.5} x2={41} y={45} from={41} label="Length" /><VDim x={46} y1={15} y2={40} from={42} label="Width" /></g></>,
  68: <><path d="M28.500 18H41a2.500 2.500 0 012.500 2.500V43a2.500 2.500 0 01-2.500 2.500H19a2.500 2.500 0 01-2.500-2.500V30z" /><path d="M18 44l5-6" strokeWidth=".6" /><g stroke="none"><T x={25} y={38}>R1</T><T x={22} y={9.5} s={4}>L2</T><T x={6} y={26} s={4}>W2</T><HDim x1={16.5} x2={28.5} y={11} from={17} /><VDim x={10} y1={18} y2={30} from={15} /><HDim x1={16.5} x2={43.5} y={51} from={46} label="Length" /><VDim x={50} y1={18} y2={45.5} from={44} label="Width" /></g></>,
  72: <><path d="M19 12.500h16a3 3 0 013 3v22a3 3 0 01-3 3H12.500a3 3 0 01-3-3V22c0-5.500 4-9.500 9.500-9.500z" /><path d="M13 16l6 6M36 14l-6 6M11 39l6-7M36 39l-6-7" strokeWidth=".6" /><g stroke="none"><T x={21} y={25} s={4}>R2</T><T x={28} y={23} s={4}>R1</T><T x={19} y={32} s={4}>R1</T><T x={28} y={32} s={4}>R1</T><HDim x1={9.5} x2={38} y={46} from={41} label="Length" /><VDim x={43} y1={12.5} y2={40.5} from={39} label="Width" lx={45} /></g></>,
  76: <><path d="M30 7h27.500v7H63v4h-5.500v7H63v4h-5.500v6.500H30V29h-5v-4h5v-7h-5v-4h5z" /><g stroke="none"><T x={48} y={17.5} s={4}>W2</T><VDim x={41} y1={7} y2={18} from={30} /><VDim x={20} y1={14} y2={28} from={24} /><T x={15.500} y={22.5} s={4}>W3</T><VDim x={10} y1={7} y2={35.5} from={29} /><T x={4} y={22.5} s={4}>Width</T><HDim x1={30} x2={57.5} y={43} from={36} label="L2" /><HDim x1={25} x2={63} y={51.5} from={30} label="Length" /></g></>,
  82: <><path d="M9 7.500h14.500V18h6V7.500H44v15H33.500v6H44V43H29.500V32.500h-6V43H9V28.500h10.500v-6H9z" /><g stroke="none"><VDim x={5} y1={17} y2={33} from={8} /><T x={7} y={27} s={4}>W1</T><VDim x={47} y1={18} y2={33} from={34} /><T x={49} y={27} s={4}>W2</T><VDim x={52} y1={7.5} y2={43} from={45} label="Width" lx={54} /><HDim x1={19} x2={33.5} y={47} from={33} /><T x={26.5} y={49} s={4}>L1</T><HDim x1={19} x2={33.5} y={51.5} from={44} /><T x={26.5} y={55} s={4}>L2</T><HDim x1={9} x2={44} y={57} from={44} label="Length" /></g></>,
  101: <Pair r={0} />,
  103: <Pair r={4}><T x={14} y={23} c="#555">R1</T><path d="M6 18l4 4" stroke="#444" strokeWidth=".5" /></Pair>,
  105: <Pair r={4}><T x={9} y={26} s={4} c="#555">R2</T><T x={16} y={25} s={4} c="#555">R1</T><path d="M6 18l4 4M19 18l-3 3" stroke="#444" strokeWidth=".5" /></Pair>,
  109: <Pair r={9} />,
};

const TYPES = [52, 56, 57, 58, 59, 63, 64, 68, 72, 76, 82, 101, 103, 105, 109];

function TypePreview() {
  return (
    <svg width="223" height="216" viewBox="0 0 223 216" fill="none" stroke="#000" role="img" aria-label="Metal Mask Type 103 shape">
      <rect x="13" y="55" width="58" height="58" rx="13" strokeWidth="1.800" />
      <rect x="92.500" y="55" width="58" height="58" rx="13" strokeWidth="1.800" />
      <path d="M18 59l20 20" strokeWidth=".8" />
      <path d="M18 59l11 8-3 3z" fill="#000" stroke="none" />
      <path d="M13.500 109v43M150.500 109v43M71 109v28M92.500 109v28M146 55h34M146 113.500h34M172.500 56v57M13.500 144.500h137M44 129.500h27M92.500 129.500H119" stroke="#777" strokeWidth=".8" />
      <g fill="#000" stroke="none">
        <path d="M172.500 55l-2 15h4zM172.500 113l-2-15h4zM13.500 144.500l16-2v4zM150.500 144.500l-16-2v4zM71 129.500l-16-2v4zM92.500 129.500l16-2v4z" />
        <g fontFamily={ART_FONT} fontSize="13" fill="#333">
          <text x="39" y="78">R1</text>
          <text x="73" y="129">CL</text>
          <text x="178" y="90">Width</text>
          <text x="82" y="160" textAnchor="middle">Length</text>
        </g>
      </g>
    </svg>
  );
}

function TypeWindow() {
  return (
    <Win $x={353} $y={289} $w={811} $h={334} $active>
      <WinHead $active><h2>Metal Mask Type</h2><Close color="#111" /></WinHead>
      <TypeBody>
        <div>
          <TypeRow>
            <label htmlFor="mask-type">Metal Mask Type</label>
            <TextField id="mask-type" readOnly defaultValue="Metal Mask Type 103" />
          </TypeRow>
          <TypeView><TypePreview /></TypeView>
        </div>
        <TypeBox>
          <TypeGrid>
            {TYPES.map((n) => {
              const on = n === 103;
              return (
                <TypeItem key={n}>
                  {ART[n] && (
                    <Thumb $on={on}>
                      <svg width="64" height="64" viewBox="0 0 64 64" fill="none" stroke="#333" strokeWidth="1">{ART[n]}</svg>
                    </Thumb>
                  )}
                  <TypeName $on={on}>{`Metal Mask Type ${n}`}</TypeName>
                  {on && (
                    <Pointer width="12" height="19" viewBox="0 0 12 19">
                      <path d="M.5.500v15.500l3.700-3.500 2.500 5.800 2.300-1-2.500-5.600h5z" fill="#fff" stroke="#000" strokeWidth=".9" />
                    </Pointer>
                  )}
                </TypeItem>
              );
            })}
          </TypeGrid>
          <ScrollBar w={16} before={64} thumb={33} after={116} />
        </TypeBox>
      </TypeBody>
      <TypeFoot>
        <Button $w={75} $strong>OK</Button>
        <Button $w={75}>Cancel</Button>
      </TypeFoot>
    </Win>
  );
}

/* ---------- page ---------- */

const MENUS = ['File', 'Setting', 'View', 'Tools', 'Properties', 'History'];

export default function App() {
  return (
    <>
      <GlobalStyle />
      <Shell>
        <TitleBar>
          <svg width="15" height="13" viewBox="0 0 15 13">
            <rect x=".5" y=".5" width="14" height="12" fill="#e8f0f4" stroke="#9aa4aa" />
            <rect x="2" y="3" width="5" height="7" fill="#4d9482" />
            <rect x="9" y="3" width="4" height="5" fill="#c4dce8" />
          </svg>
          <AppName>Metal Mask Manager</AppName>
          <SysButton aria-label="Minimize"><svg width="10" height="10" stroke="currentColor"><path d="M0 5.500h10" /></svg></SysButton>
          <SysButton aria-label="Restore"><svg width="10" height="10" fill="none" stroke="currentColor"><path d="M.5 2.500h7v7h-7zM2.500 2.500v-2h7v7h-2" /></svg></SysButton>
          <SysButton aria-label="Close window"><svg width="10" height="10" stroke="currentColor"><path d="M.5.500l9 9M9.500.500l-9 9" /></svg></SysButton>
        </TitleBar>
        <Frame>
          <MenuBar>
            <Grip />
            {MENUS.map((m) => <MenuItem key={m}>{m}</MenuItem>)}
          </MenuBar>
          <ToolBar>
            <Grip />
            {TOOLS.map((t, i) => (t ? <ToolButton key={i} aria-label={t[0]}>{t[1]}</ToolButton> : <ToolRule key={i} />))}
            <ToolMore aria-label="More tools"><Arrow $s={3} /></ToolMore>
          </ToolBar>
          <Work>
            <ReferenceDock />
            <Desk>
              <AxisV />
              <AxisH />
              <StandardWindow />
              <SettingWindow />
              <TypeWindow />
            </Desk>
            <LayerDock />
          </Work>
        </Frame>
        <StatusEdge />
      </Shell>
    </>
  );
}
